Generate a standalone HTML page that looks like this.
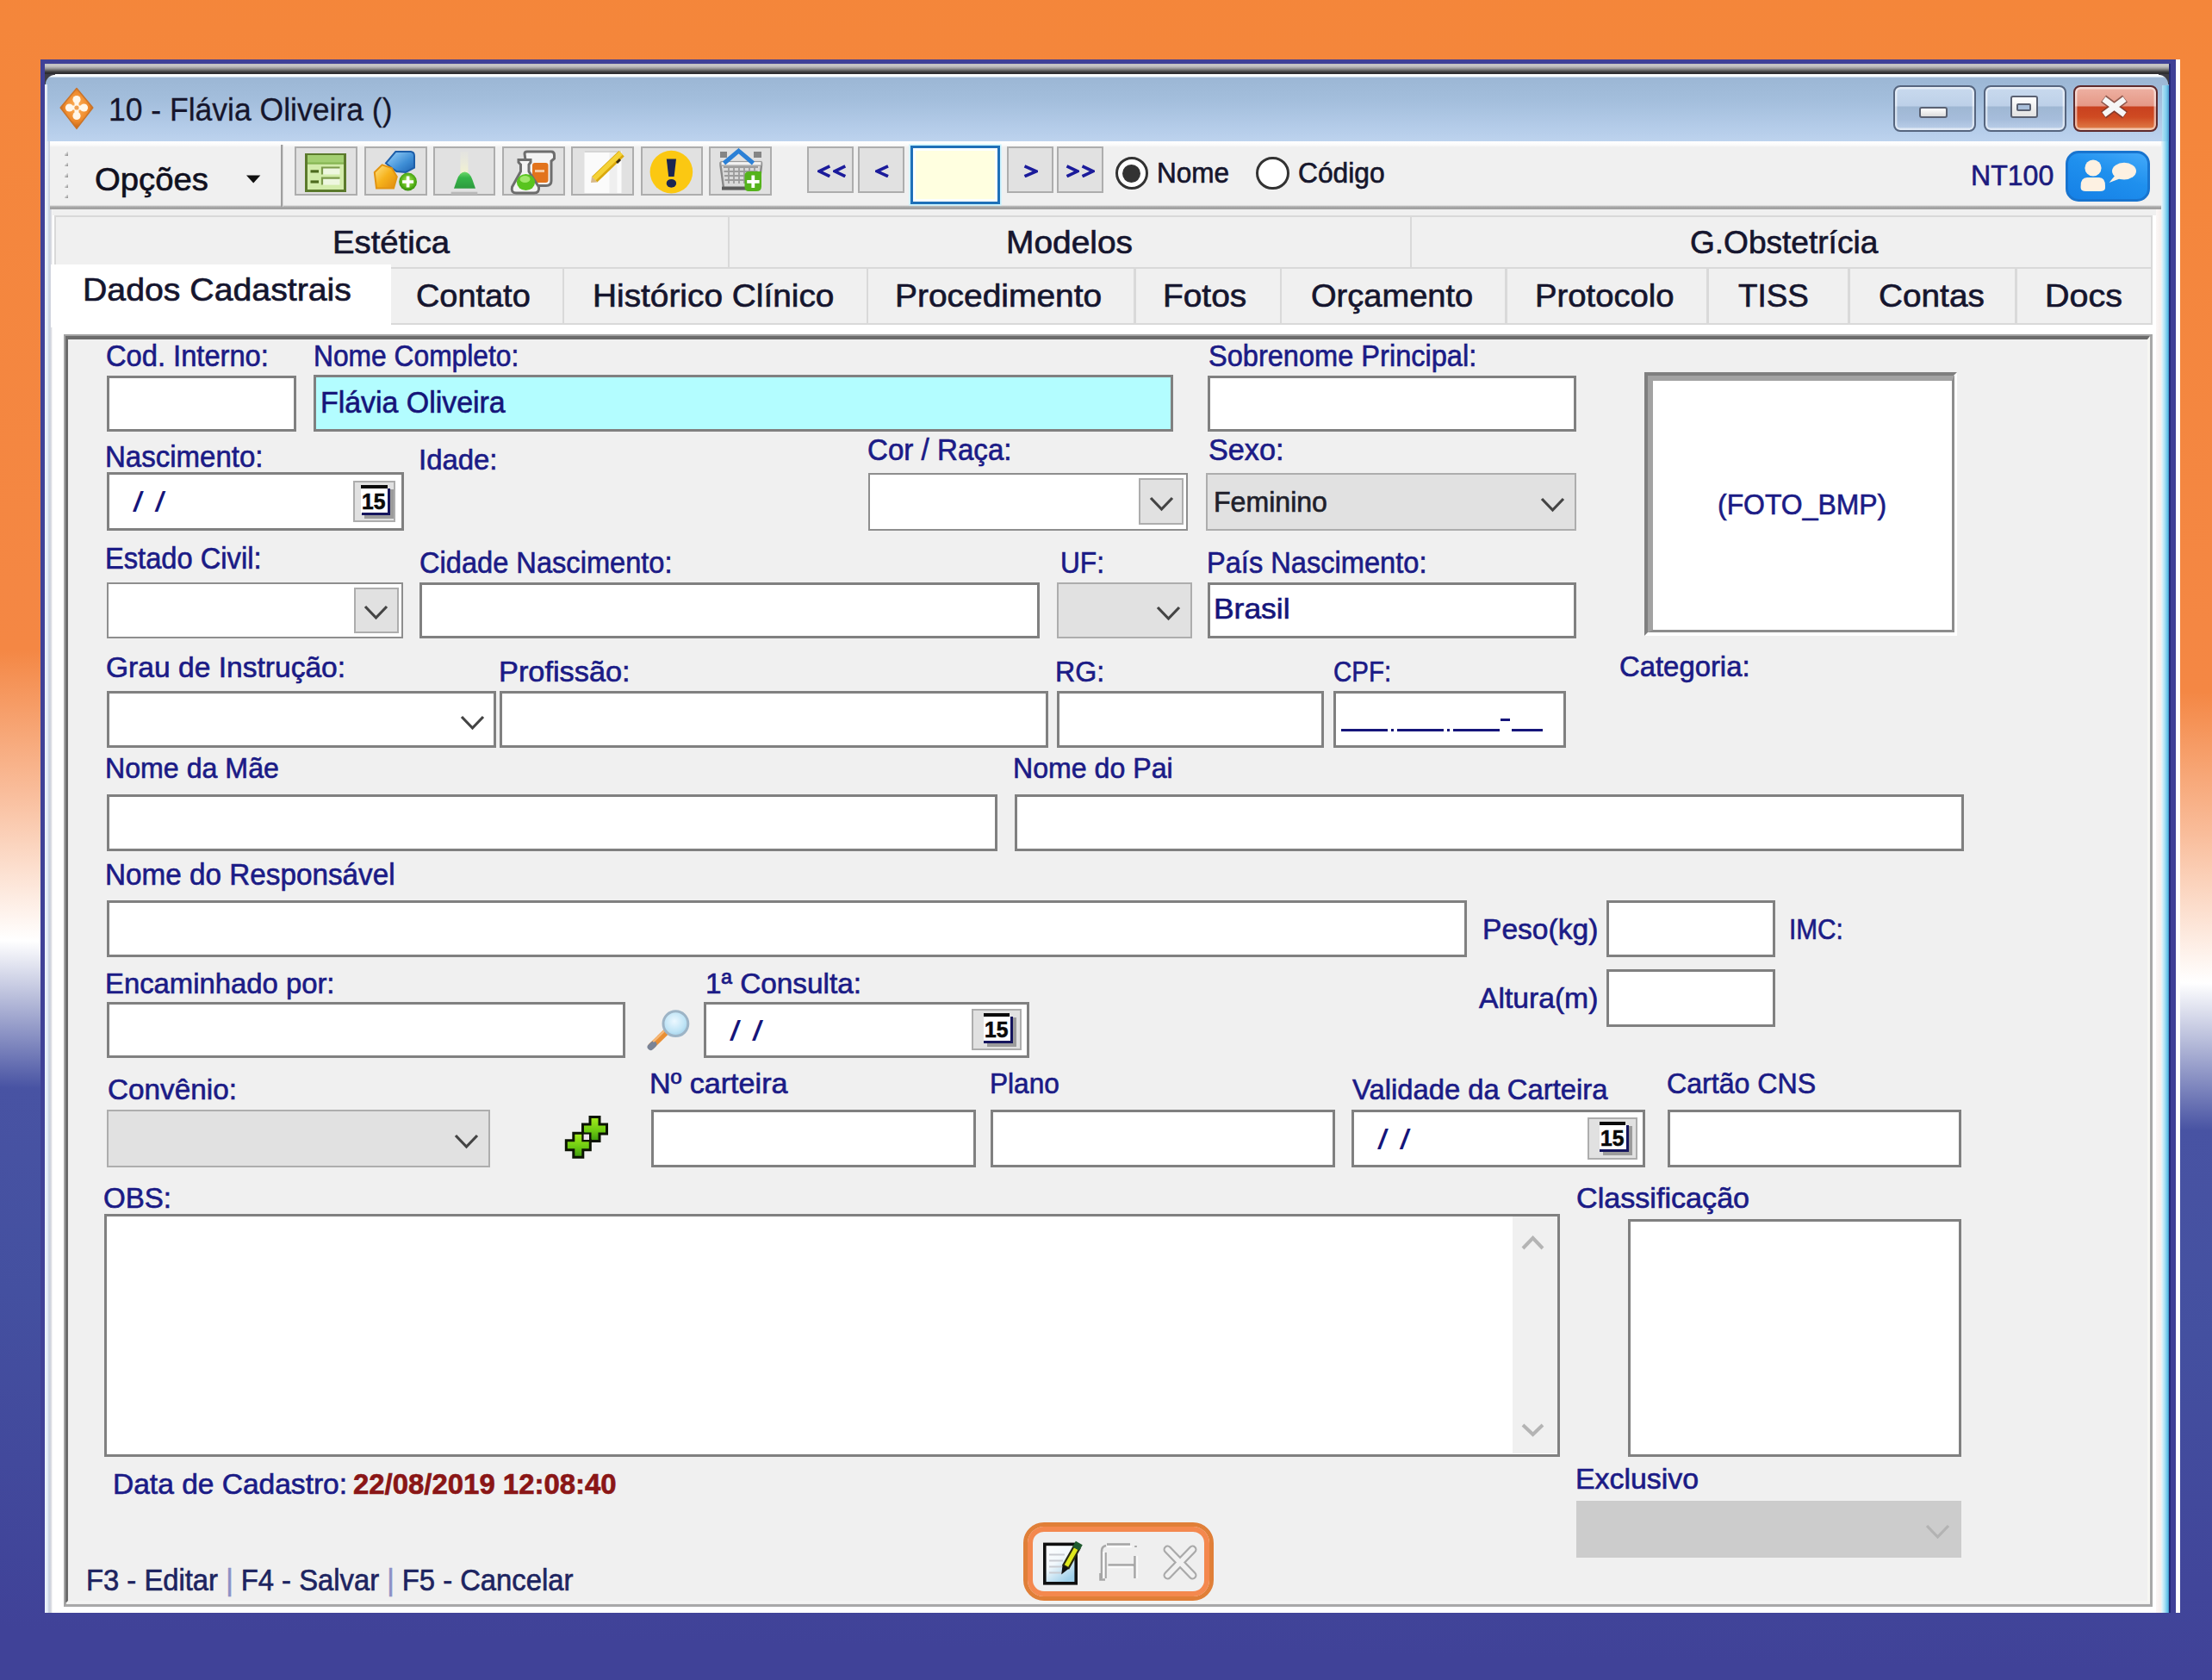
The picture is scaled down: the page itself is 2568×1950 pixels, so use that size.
<!DOCTYPE html>
<html><head><meta charset="utf-8"><title>10 - Flávia Oliveira ()</title>
<style>
html,body{margin:0;padding:0;}
body{width:2568px;height:1950px;position:relative;overflow:hidden;font-family:"Liberation Sans",sans-serif;
background:linear-gradient(181.11deg,#f4863a 0px,#f48744 803px,#f9bd9b 969px,#ffffff 1141px,#b9bedb 1207px,#4853a3 1312px,#4450a0 1549px,#404298 1940px,#404298 100%);}
div,span.t,svg{position:absolute;box-sizing:border-box;}
span.t{white-space:nowrap;line-height:1;transform-origin:0 0;-webkit-text-stroke:0.65px currentColor;}
.in{background:#fff;border:3px solid #7a7a7a;}
.cb{background:#e1e1e1;border:3px solid #adadad;}
.btn{background:#e1e1e1;border:3px solid #adadad;}
</style></head><body>
<div style="left:47.0px;top:69.0px;width:2478.8px;height:1803.0px;background:#3f4197;"></div>
<div style="left:2517.4px;top:74.0px;width:8.4px;height:1798.0px;background:linear-gradient(to right,#1d2a62 0%,#24287a 28%,#3f4197 34%,#3f4197 100%);"></div>
<div style="left:2525.8px;top:69.0px;width:5.4px;height:1803.0px;background:#ffffff;"></div>
<div style="left:52.0px;top:74.0px;width:2465.6px;height:1798.0px;background:#f0f0f0;"></div>
<div style="left:52.0px;top:74.0px;width:2465.6px;height:12.4px;background:linear-gradient(to bottom,#c2c2c2 0%,#c6c6c6 20%,#a2a2a2 42%,#6a6a6a 62%,#343436 82%,#2a2a2e 100%);"></div>
<div style="left:52.0px;top:86.0px;width:2465.6px;height:78.0px;background:linear-gradient(to bottom,#ffffff 0px,#f4f9fd 2.6px,#9cb7d5 4.6px,#a3bedc 30px,#b3cbe8 60px,#bdd3ee 78px);border-top-left-radius:12px;border-top-right-radius:12px;"></div>
<div style="left:52.0px;top:86.0px;width:11.5px;height:11.5px;background:radial-gradient(circle at 100% 100%,rgba(0,0,0,0) 10.6px,#3e3e46 11.6px);"></div>
<div style="left:2506.1px;top:86.0px;width:11.5px;height:11.5px;background:radial-gradient(circle at 0% 100%,rgba(0,0,0,0) 10.6px,#3e3e46 11.6px);"></div>
<div style="left:52.0px;top:98.0px;width:3.4px;height:66.0px;background:linear-gradient(to right,#eef4f8,#dfe9f2);"></div>
<div style="left:52.0px;top:164.0px;width:9.0px;height:1708.0px;background:linear-gradient(to right,#eef4fa 0%,#e4ecf6 35%,#c6cfe0 55%,#d6d8de 80%,#ffffff 100%);"></div>
<div style="left:2503.3px;top:164.0px;width:14.3px;height:1708.0px;background:linear-gradient(to right,#fbf7f6 0%,#f6efed 38%,#e2f4fa 45%,#a9e0f5 68%,#62c0e8 90%,#3f8fc0 100%);"></div>
<div style="left:58.0px;top:163.5px;width:2451.0px;height:79.5px;background:linear-gradient(to bottom,#ffffff 0px,#fbfbfb 4px,#f0f0f0 7px,#f0f0f0 74px,#a8a8a8 76px,#a0a0a0 78.5px,#ffffff 79.5px);"></div>
<div style="left:61.0px;top:243.0px;width:2442.3px;height:1629.0px;background:#ffffff;"></div>
<div style="left:61.0px;top:243.0px;width:2442.3px;height:7.0px;background:#f0f0f0;"></div>
<div style="left:63.0px;top:249.5px;width:2436.0px;height:62.5px;background:#f0f0f0;border:2.5px solid #d9d9d9;"></div>
<span class="t" style="left:385.9px;top:264.0px;font-size:36.5px;color:#15152e;transform:scaleX(1.0486);">Estética</span>
<div style="left:844.8px;top:251.0px;width:2.5px;height:59.0px;background:#d9d9d9;"></div>
<span class="t" style="left:1168.4px;top:264.0px;font-size:36.5px;color:#15152e;transform:scaleX(1.0652);">Modelos</span>
<div style="left:1636.8px;top:251.0px;width:2.5px;height:59.0px;background:#d9d9d9;"></div>
<span class="t" style="left:1962.1px;top:264.0px;font-size:36.5px;color:#15152e;transform:scaleX(1.0152);">G.Obstetrícia</span>
<div style="left:450.0px;top:310.0px;width:2049.0px;height:66.5px;background:#f0f0f0;border:2.5px solid #d9d9d9;"></div>
<span class="t" style="left:483.1px;top:325.0px;font-size:37.0px;color:#15152e;transform:scaleX(1.0240);">Contato</span>
<div style="left:652.8px;top:312.0px;width:2.5px;height:63.0px;background:#d9d9d9;"></div>
<span class="t" style="left:687.6px;top:325.0px;font-size:37.0px;color:#15152e;transform:scaleX(1.0491);">Histórico Clínico</span>
<div style="left:1005.8px;top:312.0px;width:2.5px;height:63.0px;background:#d9d9d9;"></div>
<span class="t" style="left:1038.9px;top:325.0px;font-size:37.0px;color:#15152e;transform:scaleX(1.0520);">Procedimento</span>
<div style="left:1316.4px;top:312.0px;width:2.5px;height:63.0px;background:#d9d9d9;"></div>
<span class="t" style="left:1349.9px;top:325.0px;font-size:37.0px;color:#15152e;transform:scaleX(1.0505);">Fotos</span>
<div style="left:1485.6px;top:312.0px;width:2.5px;height:63.0px;background:#d9d9d9;"></div>
<span class="t" style="left:1522.3px;top:325.0px;font-size:37.0px;color:#15152e;transform:scaleX(1.0288);">Orçamento</span>
<div style="left:1747.2px;top:312.0px;width:2.5px;height:63.0px;background:#d9d9d9;"></div>
<span class="t" style="left:1781.9px;top:325.0px;font-size:37.0px;color:#15152e;transform:scaleX(1.0337);">Protocolo</span>
<div style="left:1981.1px;top:312.0px;width:2.5px;height:63.0px;background:#d9d9d9;"></div>
<span class="t" style="left:2018.0px;top:325.0px;font-size:37.0px;color:#15152e;transform:scaleX(0.9945);">TISS</span>
<div style="left:2145.1px;top:312.0px;width:2.5px;height:63.0px;background:#d9d9d9;"></div>
<span class="t" style="left:2181.1px;top:325.0px;font-size:37.0px;color:#15152e;transform:scaleX(1.0478);">Contas</span>
<div style="left:2339.0px;top:312.0px;width:2.5px;height:63.0px;background:#d9d9d9;"></div>
<span class="t" style="left:2373.8px;top:325.0px;font-size:37.0px;color:#15152e;transform:scaleX(1.0673);">Docs</span>
<div style="left:59.0px;top:307.0px;width:394.5px;height:73.0px;background:#ffffff;"></div>
<span class="t" style="left:95.9px;top:318.0px;font-size:37.0px;color:#15152e;transform:scaleX(1.0607);">Dados Cadastrais</span>
<div style="left:73.6px;top:387.6px;width:2425.4px;height:1477.0px;background:#f0f0f0;border-style:solid;border-width:3px;border-color:#a3a3a3 #a9a9a9 #a9a9a9 #a3a3a3;"></div>
<div style="left:76.4px;top:390.4px;width:2419.8px;height:1470.6px;background:#f0f0f0;border-style:solid;border-width:4px 3.5px 3px 3.6px;border-color:#6b6b6b #f7f7f3 #f4f4f2 #6b6b6b;"></div>
<div style="left:124.0px;top:435.5px;width:220.0px;height:65.5px;background:#ffffff;border:3.1px solid #808080;"></div>
<div style="left:364.3px;top:435.2px;width:997.7px;height:65.8px;background:#b3fdff;border:3.1px solid #808080;"></div>
<div style="left:1402.0px;top:435.5px;width:428.0px;height:65.5px;background:#ffffff;border:3.1px solid #808080;"></div>
<div style="left:124.0px;top:548.0px;width:344.5px;height:68.0px;background:#ffffff;border:3.1px solid #808080;"></div>
<div style="left:1008.0px;top:548.5px;width:371.4px;height:67.0px;background:#ffffff;border:2.6px solid #8e8e8e;"></div>
<div style="left:1322.4px;top:554.8px;width:51.5px;height:54.4px;background:#e1e1e1;border:2.6px solid #adadad;"></div>
<svg style="left:1332.7px;top:574.5px;width:31px;height:20px" viewBox="-3 -3 31 20"><path d="M0 0 L12.5 13 L25 0" fill="none" stroke="#444" stroke-width="3.2" stroke-linecap="butt" stroke-linejoin="miter"/></svg>
<div style="left:1400.0px;top:548.5px;width:430.0px;height:67.0px;background:#e1e1e1;border:2.5px solid #adadad;"></div>
<svg style="left:1787.0px;top:575.5px;width:31px;height:20px" viewBox="-3 -3 31 20"><path d="M0 0 L12.5 13 L25 0" fill="none" stroke="#444" stroke-width="3.2" stroke-linecap="butt" stroke-linejoin="miter"/></svg>
<div style="left:124.0px;top:675.8px;width:344.0px;height:65.5px;background:#ffffff;border:2.6px solid #8e8e8e;"></div>
<div style="left:411.0px;top:682.1px;width:51.5px;height:52.9px;background:#e1e1e1;border:2.6px solid #adadad;"></div>
<svg style="left:421.2px;top:701.0px;width:31px;height:20px" viewBox="-3 -3 31 20"><path d="M0 0 L12.5 13 L25 0" fill="none" stroke="#444" stroke-width="3.2" stroke-linecap="butt" stroke-linejoin="miter"/></svg>
<div style="left:487.0px;top:675.8px;width:720.0px;height:65.5px;background:#ffffff;border:3.1px solid #808080;"></div>
<div style="left:1227.0px;top:675.8px;width:156.5px;height:65.5px;background:#e1e1e1;border:2.5px solid #adadad;"></div>
<svg style="left:1340.5px;top:702.0px;width:31px;height:20px" viewBox="-3 -3 31 20"><path d="M0 0 L12.5 13 L25 0" fill="none" stroke="#444" stroke-width="3.2" stroke-linecap="butt" stroke-linejoin="miter"/></svg>
<div style="left:1402.0px;top:675.8px;width:428.0px;height:65.5px;background:#ffffff;border:3.1px solid #808080;"></div>
<div style="left:124.0px;top:802.3px;width:451.5px;height:65.9px;background:#ffffff;border:3.1px solid #808080;"></div>
<svg style="left:533.0px;top:828.5px;width:31px;height:20px" viewBox="-3 -3 31 20"><path d="M0 0 L12.5 13 L25 0" fill="none" stroke="#444" stroke-width="3.2" stroke-linecap="butt" stroke-linejoin="miter"/></svg>
<div style="left:580.0px;top:802.3px;width:636.7px;height:65.9px;background:#ffffff;border:3.1px solid #808080;"></div>
<div style="left:1226.8px;top:802.3px;width:310.5px;height:65.9px;background:#ffffff;border:3.1px solid #808080;"></div>
<div style="left:1547.5px;top:802.3px;width:270.1px;height:65.9px;background:#ffffff;border:3.1px solid #808080;"></div>
<div style="left:124.0px;top:922.3px;width:1033.7px;height:65.9px;background:#ffffff;border:3.1px solid #808080;"></div>
<div style="left:1178.0px;top:922.3px;width:1101.6px;height:65.9px;background:#ffffff;border:3.1px solid #808080;"></div>
<div style="left:124.0px;top:1045.0px;width:1579.0px;height:66.0px;background:#ffffff;border:3.1px solid #808080;"></div>
<div style="left:1865.0px;top:1045.0px;width:196.0px;height:66.0px;background:#ffffff;border:3.1px solid #808080;"></div>
<div style="left:1865.0px;top:1125.3px;width:196.0px;height:66.3px;background:#ffffff;border:3.1px solid #808080;"></div>
<div style="left:124.0px;top:1162.5px;width:602.0px;height:65.7px;background:#ffffff;border:3.1px solid #808080;"></div>
<div style="left:817.3px;top:1162.5px;width:377.6px;height:65.7px;background:#ffffff;border:3.1px solid #808080;"></div>
<div style="left:124.0px;top:1288.4px;width:445.4px;height:66.6px;background:#e1e1e1;border:2.5px solid #adadad;"></div>
<svg style="left:526.4px;top:1315.2px;width:31px;height:20px" viewBox="-3 -3 31 20"><path d="M0 0 L12.5 13 L25 0" fill="none" stroke="#444" stroke-width="3.2" stroke-linecap="butt" stroke-linejoin="miter"/></svg>
<div style="left:755.5px;top:1288.4px;width:377.9px;height:66.6px;background:#ffffff;border:3.1px solid #808080;"></div>
<div style="left:1149.7px;top:1288.4px;width:400.0px;height:66.6px;background:#ffffff;border:3.1px solid #808080;"></div>
<div style="left:1568.5px;top:1288.4px;width:341.5px;height:66.6px;background:#ffffff;border:3.1px solid #808080;"></div>
<div style="left:1935.5px;top:1288.4px;width:341.5px;height:66.6px;background:#ffffff;border:3.1px solid #808080;"></div>
<div style="left:121.0px;top:1409.0px;width:1690.4px;height:281.5px;background:#ffffff;border:3.1px solid #808080;"></div>
<div style="left:1755.6px;top:1412.2px;width:52.6px;height:275.1px;background:#f0f0f0;"></div>
<svg style="left:1765px;top:1430px;width:30px;height:24px" viewBox="0 0 30 24"><path d="M3 19 L14.6 7 L26 19" fill="none" stroke="#b4b4b4" stroke-width="4"/></svg>
<svg style="left:1765px;top:1650px;width:30px;height:22px" viewBox="0 0 30 22"><path d="M3 4 L14.6 15 L26 4" fill="none" stroke="#b4b4b4" stroke-width="4"/></svg>
<div style="left:1890.0px;top:1415.3px;width:387.0px;height:275.4px;background:#ffffff;border:3.1px solid #808080;"></div>
<div style="left:1830.0px;top:1741.5px;width:447.0px;height:66.3px;background:#cccccc;"></div>
<svg style="left:2233.8px;top:1768.0px;width:31px;height:20px" viewBox="-3 -3 31 20"><path d="M0 0 L12.5 13 L25 0" fill="none" stroke="#b3b3b3" stroke-width="3.2" stroke-linecap="butt" stroke-linejoin="miter"/></svg>
<div style="left:1908.7px;top:431.9px;width:363.7px;height:306.1px;background:#fff;border-style:solid;border-width:4px;border-color:#7f7f7f #ffffff #ffffff #7f7f7f;"></div>
<div style="left:1912.5px;top:435.7px;width:356.5px;height:298.8px;background:#fff;border-style:solid;border-width:6px 3px 3.5px 6px;border-color:#a2a2a2 #8d8d8d #8d8d8d #a2a2a2;"></div>
<span class="t" style="left:123.4px;top:396.0px;font-size:34.5px;color:#1b1b86;transform:scaleX(0.9468);">Cod. Interno:</span>
<span class="t" style="left:363.5px;top:396.0px;font-size:34.5px;color:#1b1b86;transform:scaleX(0.9207);">Nome Completo:</span>
<span class="t" style="left:1402.5px;top:396.0px;font-size:34.5px;color:#1b1b86;transform:scaleX(0.9436);">Sobrenome Principal:</span>
<span class="t" style="left:122.4px;top:513.0px;font-size:34.5px;color:#1b1b86;transform:scaleX(0.9572);">Nascimento:</span>
<span class="t" style="left:486.0px;top:516.0px;font-size:34.0px;color:#1b1b86;transform:scaleX(0.9676);">Idade:</span>
<span class="t" style="left:1007.3px;top:505.0px;font-size:34.5px;color:#1b1b86;transform:scaleX(0.9603);">Cor / Raça:</span>
<span class="t" style="left:1402.5px;top:505.0px;font-size:34.5px;color:#1b1b86;transform:scaleX(0.9921);">Sexo:</span>
<span class="t" style="left:122.4px;top:631.0px;font-size:34.5px;color:#1b1b86;transform:scaleX(0.9465);">Estado Civil:</span>
<span class="t" style="left:487.4px;top:636.0px;font-size:34.5px;color:#1b1b86;transform:scaleX(0.9449);">Cidade Nascimento:</span>
<span class="t" style="left:1231.4px;top:636.0px;font-size:34.5px;color:#1b1b86;transform:scaleX(0.9175);">UF:</span>
<span class="t" style="left:1401.4px;top:636.0px;font-size:34.5px;color:#1b1b86;transform:scaleX(0.9448);">País Nascimento:</span>
<span class="t" style="left:123.3px;top:757.0px;font-size:34.0px;color:#1b1b86;transform:scaleX(0.9876);">Grau de Instrução:</span>
<span class="t" style="left:578.9px;top:762.0px;font-size:34.0px;color:#1b1b86;transform:scaleX(1.0095);">Profissão:</span>
<span class="t" style="left:1225.4px;top:762.0px;font-size:34.0px;color:#1b1b86;transform:scaleX(0.9445);">RG:</span>
<span class="t" style="left:1547.5px;top:762.0px;font-size:34.0px;color:#1b1b86;transform:scaleX(0.8659);">CPF:</span>
<span class="t" style="left:1880.4px;top:756.0px;font-size:34.0px;color:#1b1b86;transform:scaleX(0.9662);">Categoria:</span>
<span class="t" style="left:122.4px;top:874.0px;font-size:34.0px;color:#1b1b86;transform:scaleX(0.9454);">Nome da Mãe</span>
<span class="t" style="left:1176.4px;top:874.0px;font-size:34.0px;color:#1b1b86;transform:scaleX(0.9447);">Nome do Pai</span>
<span class="t" style="left:122.3px;top:998.0px;font-size:34.5px;color:#1b1b86;transform:scaleX(0.9643);">Nome do Responsável</span>
<span class="t" style="left:1721.3px;top:1061.0px;font-size:34.0px;color:#1b1b86;transform:scaleX(0.9875);">Peso(kg)</span>
<span class="t" style="left:2076.7px;top:1061.0px;font-size:34.0px;color:#1b1b86;transform:scaleX(0.8755);">IMC:</span>
<span class="t" style="left:1717.3px;top:1141.0px;font-size:34.0px;color:#1b1b86;transform:scaleX(0.9898);">Altura(m)</span>
<span class="t" style="left:122.4px;top:1124.0px;font-size:34.0px;color:#1b1b86;transform:scaleX(0.9656);">Encaminhado por:</span>
<span class="t" style="left:818.9px;top:1124.0px;font-size:34.0px;color:#1b1b86;transform:scaleX(0.9810);">1ª Consulta:</span>
<span class="t" style="left:125.3px;top:1248.0px;font-size:33.5px;color:#1b1b86;transform:scaleX(0.9943);">Convênio:</span>
<span class="t" style="left:753.9px;top:1241.0px;font-size:33.5px;color:#1b1b86;transform:scaleX(1.0196);">Nº carteira</span>
<span class="t" style="left:1148.5px;top:1241.0px;font-size:33.5px;color:#1b1b86;transform:scaleX(0.9439);">Plano</span>
<span class="t" style="left:1570.3px;top:1248.0px;font-size:33.5px;color:#1b1b86;transform:scaleX(0.9786);">Validade da Carteira</span>
<span class="t" style="left:1935.1px;top:1241.0px;font-size:33.5px;color:#1b1b86;transform:scaleX(0.9589);">Cartão CNS</span>
<span class="t" style="left:120.3px;top:1374.0px;font-size:33.5px;color:#1b1b86;transform:scaleX(0.9862);">OBS:</span>
<span class="t" style="left:1830.3px;top:1374.0px;font-size:33.5px;color:#1b1b86;transform:scaleX(1.0190);">Classificação</span>
<span class="t" style="left:1829.3px;top:1700.0px;font-size:33.5px;color:#1b1b86;transform:scaleX(1.0108);">Exclusivo</span>
<span class="t" style="left:130.5px;top:1706.0px;font-size:33.5px;color:#1b1b86;transform:scaleX(1.0007);">Data de Cadastro:</span>
<span class="t" style="left:1993.8px;top:568.0px;font-size:34.0px;color:#1b1b86;transform:scaleX(0.9387);">(FOTO_BMP)</span>
<span class="t" style="left:409.5px;top:1706.0px;font-size:33.5px;color:#8a1616;font-weight:bold;transform:scaleX(0.9824);">22/08/2019 12:08:40</span>
<span class="t" style="left:100.1px;top:1817.0px;font-size:34.5px;color:#1d2460;transform:scaleX(0.9501);">F3 - Editar <span style="color:#8d8fc6">|</span> F4 - Salvar <span style="color:#8d8fc6">|</span> F5 - Cancelar</span>
<span class="t" style="left:372.3px;top:450.0px;font-size:35.5px;color:#15157a;transform:scaleX(0.9547);">Flávia Oliveira</span>
<span class="t" style="left:1409.4px;top:566.0px;font-size:33.0px;color:#20202a;transform:scaleX(0.9721);">Feminino</span>
<span class="t" style="left:1409.2px;top:689.0px;font-size:34.0px;color:#15157a;transform:scaleX(1.0416);">Brasil</span>
<span class="t" style="left:153.6px;top:566.0px;font-size:33.0px;color:#15157a;transform:scaleX(1.3936);-webkit-text-stroke:0;">/ /</span>
<span class="t" style="left:846.6px;top:1180.0px;font-size:33.0px;color:#15157a;transform:scaleX(1.4190);-webkit-text-stroke:0;">/ /</span>
<span class="t" style="left:1599.0px;top:1306.0px;font-size:33.0px;color:#15157a;transform:scaleX(1.4008);-webkit-text-stroke:0;">/ /</span>
<div style="left:1557.2px;top:846.2px;width:54.1px;height:3.0px;background:#15157a;"></div>
<div style="left:1621.5px;top:846.2px;width:54.9px;height:3.0px;background:#15157a;"></div>
<div style="left:1686.6px;top:846.2px;width:54.1px;height:3.0px;background:#15157a;"></div>
<div style="left:1755.0px;top:846.2px;width:36.2px;height:3.0px;background:#15157a;"></div>
<div style="left:1615.4px;top:846.0px;width:3.0px;height:3.2px;background:#15157a;"></div>
<div style="left:1680.0px;top:846.0px;width:3.0px;height:3.2px;background:#15157a;"></div>
<div style="left:1742.3px;top:834.0px;width:10.6px;height:3.0px;background:#15157a;"></div>
<span class="t" style="left:125.8px;top:110.0px;font-size:36.5px;color:#16162c;transform:scaleX(0.9727);-webkit-text-stroke:0.3px currentColor;">10 - Flávia Oliveira ()</span>
<span class="t" style="left:110.0px;top:190.0px;font-size:37.5px;color:#101020;transform:scaleX(1.0207);">Opções</span>
<span class="t" style="left:2288.4px;top:186.0px;font-size:34.0px;color:#1b1b7e;transform:scaleX(0.9430);">NT100</span>
<span class="t" style="left:1342.8px;top:184.0px;font-size:33.0px;color:#16162c;transform:scaleX(0.9549);">Nome</span>
<span class="t" style="left:1507.1px;top:184.0px;font-size:33.0px;color:#16162c;transform:scaleX(0.9622);">Código</span>
<svg style="left:66.0px;top:98.0px;width:46.0px;height:56.0px" viewBox="0 0 46.0 56.0">
<defs><radialGradient id="dg" cx="50%" cy="45%" r="60%"><stop offset="0" stop-color="#ffb45e"/><stop offset="0.6" stop-color="#ee8a2c"/><stop offset="1" stop-color="#b85a12"/></radialGradient></defs>
<path d="M23 4.6 L41.8 27 L23 51.4 L4.2 27 Z" fill="url(#dg)" stroke="#c9742a" stroke-width="1.5" stroke-linejoin="round"/>
<g fill="#fff7ea"><circle cx="23" cy="17.5" r="4.6"/><circle cx="14.5" cy="27" r="4.6"/><circle cx="31.5" cy="27" r="4.6"/><circle cx="23" cy="36.5" r="4.6"/><rect x="20.5" y="17" width="5" height="20"/><rect x="14" y="24.5" width="18" height="5"/></g>
<circle cx="23" cy="27" r="2.6" fill="#f0a050"/>
</svg>
<div style="left:2198.2px;top:98.8px;width:95.8px;height:54.2px;background:linear-gradient(to bottom,#c9daee 0%,#bdd0e8 44%,#9fb7d3 46%,#a6bddb 75%,#bcd0ea 100%);border:2.6px solid #56657e;border-radius:8px;box-shadow:inset 0 0 0 2.4px rgba(255,255,255,0.55);"></div>
<div style="left:2303.4px;top:98.8px;width:95.6px;height:54.2px;background:linear-gradient(to bottom,#c9daee 0%,#bdd0e8 44%,#9fb7d3 46%,#a6bddb 75%,#bcd0ea 100%);border:2.6px solid #56657e;border-radius:8px;box-shadow:inset 0 0 0 2.4px rgba(255,255,255,0.55);"></div>
<div style="left:2407.0px;top:98.8px;width:98.0px;height:54.2px;background:linear-gradient(to bottom,#eeb2a4 0%,#e59886 44%,#c9411f 46%,#cf4a22 70%,#e0804a 100%);border:2.6px solid #5e2a2c;border-radius:8px;box-shadow:inset 0 0 0 2.4px rgba(255,255,255,0.55);"></div>
<div style="left:2228.3px;top:124.0px;width:32.4px;height:13.2px;background:linear-gradient(to bottom,#ffffff,#dcdcdc);border:2.6px solid #5a6172;border-radius:3px;"></div>
<div style="left:2333.5px;top:110.9px;width:32.5px;height:26.3px;background:linear-gradient(to bottom,#ffffff,#e2e2e2);border:2.6px solid #5a6172;border-radius:3px;"></div>
<div style="left:2341.2px;top:119.8px;width:17.0px;height:8.8px;background:#a9bfda;border:2.6px solid #5a6172;border-radius:2px;"></div>
<svg style="left:2434.0px;top:107.0px;width:41.0px;height:34.0px" viewBox="0 0 41.0 34.0"><path d="M8 7.6 L33 26.4 M33 7.6 L8 26.4" stroke="#6b3a32" stroke-width="10" stroke-linecap="butt" opacity="0.7"/><path d="M8.4 8 L32.6 26 M32.6 8 L8.4 26" stroke="#f6f6f6" stroke-width="6.6" stroke-linecap="butt"/></svg>
<div style="left:2509.8px;top:99.0px;width:7.8px;height:65.0px;background:linear-gradient(to right,#b6e2f4,#7fcdee 60%,#4a9fd0 100%);"></div>
<div style="left:74.5px;top:176.3px;width:4.5px;height:4.4px;background:linear-gradient(135deg,#f8f8f8 20%,#9a9a9a 80%);"></div>
<div style="left:74.5px;top:188.5px;width:4.5px;height:4.4px;background:linear-gradient(135deg,#f8f8f8 20%,#9a9a9a 80%);"></div>
<div style="left:74.5px;top:201.2px;width:4.5px;height:4.4px;background:linear-gradient(135deg,#f8f8f8 20%,#9a9a9a 80%);"></div>
<div style="left:74.5px;top:213.6px;width:4.5px;height:4.4px;background:linear-gradient(135deg,#f8f8f8 20%,#9a9a9a 80%);"></div>
<div style="left:74.5px;top:225.8px;width:4.5px;height:4.4px;background:linear-gradient(135deg,#f8f8f8 20%,#9a9a9a 80%);"></div>
<svg style="left:284.0px;top:202.0px;width:20.0px;height:12.0px" viewBox="0 0 20.0 12.0"><path d="M2 1.6 L18.3 1.6 L10.2 10.6 Z" fill="#101010"/></svg>
<div style="left:326.0px;top:167.5px;width:3.2px;height:72.5px;background:linear-gradient(to right,#9f9f9f 60%,#ffffff 100%);"></div>
<div style="left:342.3px;top:170.0px;width:72.6px;height:57.2px;background:#e1e1e1;border:2.8px solid #adadad;"></div>
<div style="left:423.0px;top:170.0px;width:72.6px;height:57.2px;background:#e1e1e1;border:2.8px solid #adadad;"></div>
<div style="left:502.8px;top:170.0px;width:72.6px;height:57.2px;background:#e1e1e1;border:2.8px solid #adadad;"></div>
<div style="left:583.2px;top:170.0px;width:72.6px;height:57.2px;background:#e1e1e1;border:2.8px solid #adadad;"></div>
<div style="left:663.0px;top:170.0px;width:72.6px;height:57.2px;background:#e1e1e1;border:2.8px solid #adadad;"></div>
<div style="left:743.6px;top:170.0px;width:72.6px;height:57.2px;background:#e1e1e1;border:2.8px solid #adadad;"></div>
<div style="left:823.4px;top:170.0px;width:72.6px;height:57.2px;background:#e1e1e1;border:2.8px solid #adadad;"></div>
<svg style="left:354.0px;top:178.0px;width:48.0px;height:45.0px" viewBox="0 0 48.0 45.0">
<rect x="1.5" y="1" width="45" height="42.5" fill="#d3ecab" stroke="#5b7a2c" stroke-width="3"/>
<rect x="3" y="2" width="42" height="9" fill="#a3cf72"/>
<rect x="3" y="10.5" width="42" height="2.2" fill="#86b553"/>
<rect x="6.5" y="19.3" width="9.5" height="3.2" fill="#4d6a1e"/>
<rect x="6.5" y="31.4" width="9.5" height="3.2" fill="#4d6a1e"/>
<rect x="20" y="16.5" width="20.5" height="8" fill="#eef7e0"/><path d="M20 24.5 V16.5 H40.5" fill="none" stroke="#7b9a4a" stroke-width="2.2"/>
<rect x="20" y="28.6" width="20.5" height="8" fill="#eef7e0"/><path d="M20 36.6 V28.6 H40.5" fill="none" stroke="#7b9a4a" stroke-width="2.2"/>
</svg>
<svg style="left:430.0px;top:172.0px;width:60.0px;height:54.0px" viewBox="0 0 60.0 54.0">
<defs><linearGradient id="pb" x1="0" y1="0" x2="1" y2="1"><stop offset="0" stop-color="#9fd6fb"/><stop offset="0.6" stop-color="#3f8fd6"/><stop offset="1" stop-color="#1e62b0"/></linearGradient>
<linearGradient id="py" x1="0" y1="0" x2="1" y2="1"><stop offset="0" stop-color="#ffe58a"/><stop offset="0.5" stop-color="#f6b21c"/><stop offset="1" stop-color="#e08a10"/></linearGradient>
<radialGradient id="pg" cx="50%" cy="45%" r="60%"><stop offset="0" stop-color="#b6f05a"/><stop offset="0.7" stop-color="#4caa14"/><stop offset="1" stop-color="#2f8208"/></radialGradient></defs>
<path d="M29.3 4 H47 Q51 4.6 51 9 V22.6 L41 28 L30.5 27 L24.8 23 L18 17.4 Z" fill="url(#pb)" stroke="#1d5ea8" stroke-width="2"/>
<path d="M4.8 28 L13.6 19.4 L24.8 23 L30.8 33.2 L27 46.6 H7 Z" fill="url(#py)" stroke="#e19412" stroke-width="2"/>
<circle cx="43.6" cy="39" r="10.4" fill="url(#pg)"/>
<path d="M43.6 32.5 V45.5 M37.1 39 H50.1" stroke="#ffffff" stroke-width="3.6"/>
</svg>
<svg style="left:515.0px;top:172.0px;width:50.0px;height:56.0px" viewBox="0 0 50.0 56.0">
<defs><linearGradient id="fn" x1="0" y1="0" x2="0" y2="1"><stop offset="0" stop-color="#ededdc" stop-opacity="0.2"/><stop offset="1" stop-color="#f3f3cf"/></linearGradient>
<linearGradient id="fg" x1="0" y1="0" x2="0" y2="1"><stop offset="0" stop-color="#6fd86a"/><stop offset="0.35" stop-color="#36b548"/><stop offset="1" stop-color="#2d9a3e"/></linearGradient></defs>
<rect x="19.5" y="4" width="9" height="26" fill="url(#fn)"/>
<path d="M12 46.8 L15.4 37 Q18.6 27.8 24.5 27.6 Q30.4 27.8 33.6 37 L37 46.8 Z" fill="url(#fg)"/>
<rect x="8.7" y="50.7" width="30.6" height="3.3" fill="#b9b9b9"/>
</svg>
<svg style="left:590.0px;top:172.0px;width:60.0px;height:56.0px" viewBox="0 0 60.0 56.0">
<path d="M19 6.5 Q19 4 22 4 H50 Q53.5 4 53.5 8 V12 L50 15 V38 Q50 43.5 44 43.5 H24 Z" fill="#f4f4f4" stroke="#6e6e6e" stroke-width="3"/>
<rect x="28" y="17" width="18.5" height="23" rx="3" fill="#e2731c"/>
<rect x="31" y="25" width="11" height="3" fill="#f6c9a0"/>
<path d="M12 13.5 H26 V16.5 L24 19 V27 L35.5 45 Q36.5 52 30 52 H9 Q3 52 4.5 45 L14.5 27 V19 L12 16.5 Z" fill="#f4f4f4" stroke="#6e6e6e" stroke-width="3"/>
<ellipse cx="20.5" cy="39.5" rx="10.6" ry="9.6" fill="#58c41e"/>
<ellipse cx="19.5" cy="36" rx="6" ry="4" fill="#9fe86a"/>
</svg>
<svg style="left:676.0px;top:173.0px;width:50.0px;height:54.0px" viewBox="0 0 50.0 54.0">
<rect x="2.5" y="2" width="43" height="49" fill="#fbfbfb"/>
<path d="M36 2 V51" stroke="#e4e4e4" stroke-width="9" opacity="0.5"/>
<path d="M2.5 3 H45" stroke="#c9c9c9" stroke-width="1.6"/>
<path d="M45.6 5.2 L14.2 35.2" stroke="#d9a80c" stroke-width="9" stroke-linecap="butt"/>
<path d="M45 4.6 L13.6 34.6" stroke="#f5d236" stroke-width="5.5" stroke-linecap="butt"/>
<path d="M17.5 38.6 L10 39 L11 31.8 Z" fill="#d7b98a"/>
<path d="M44 12 L40 16" stroke="#3b2d10" stroke-width="3"/>
</svg>
<svg style="left:752.0px;top:173.0px;width:55.0px;height:54.0px" viewBox="0 0 55.0 54.0">
<circle cx="27.4" cy="26.6" r="24.8" fill="#fbc812"/>
<path d="M21.8 11.6 H33 L30.6 32 H24.2 Z" fill="#1a2552"/>
<ellipse cx="27.4" cy="39.8" rx="5.7" ry="4.9" fill="#1a2552"/>
</svg>
<svg style="left:832.0px;top:172.0px;width:58.0px;height:54.0px" viewBox="0 0 58.0 54.0">
<rect x="4" y="4" width="8" height="7" fill="#858585"/><rect x="43" y="4" width="9" height="7" fill="#858585"/>
<path d="M4.5 17.5 H52 V20 L49 46 H8 L4.5 20 Z" fill="#d9d9d9" stroke="#8a8a8a" stroke-width="2.4"/>
<path d="M8 22 H48 M8.5 27 H47.5 M9 32 H47 M9.5 37 H46.5 M14 21 V41 M20 21 V41 M26 21 V41 M32 21 V41 M38 21 V41 M44 21 V41" stroke="#9c9c9c" stroke-width="1.8"/>
<rect x="6" y="44.6" width="44" height="4" fill="#5c5c5c"/>
<rect x="5" y="15.5" width="47" height="4.6" fill="#f2f2f2" stroke="#9a9a9a" stroke-width="1.2"/>
<path d="M8.5 17.5 L25.5 3.2 L42.5 17.5" fill="none" stroke="#2b80d6" stroke-width="5" stroke-linejoin="miter"/>
<path d="M32.5 31.5 Q32.5 27 38 27 H52 V44.5 Q52 50 46 50 H37 Q32.5 50 32.5 45 Z" fill="#55b31c"/>
<path d="M42.3 31.6 V46 M35.2 38.8 H49.6" stroke="#ffffff" stroke-width="3.8"/>
</svg>
<div style="left:937.0px;top:170.4px;width:54.0px;height:53.2px;background:#e1e1e1;border:2.8px solid #adadad;"></div>
<div style="left:996.0px;top:170.4px;width:54.0px;height:53.2px;background:#e1e1e1;border:2.8px solid #adadad;"></div>
<div style="left:1168.7px;top:170.4px;width:53.9px;height:53.2px;background:#e1e1e1;border:2.8px solid #adadad;"></div>
<div style="left:1227.0px;top:170.4px;width:54.0px;height:53.2px;background:#e1e1e1;border:2.8px solid #adadad;"></div>
<svg style="left:948.8px;top:190.5px;width:15.8px;height:15.5px" viewBox="0 0 15.8 15.5"><path d="M14.3 1.8 L2 7.8 L14.3 13.7" fill="none" stroke="#1b1b9b" stroke-width="3.6" stroke-linejoin="miter"/></svg>
<svg style="left:966.8px;top:190.5px;width:15.8px;height:15.5px" viewBox="0 0 15.8 15.5"><path d="M14.3 1.8 L2 7.8 L14.3 13.7" fill="none" stroke="#1b1b9b" stroke-width="3.6" stroke-linejoin="miter"/></svg>
<svg style="left:1015.5px;top:190.5px;width:16.5px;height:15.5px" viewBox="0 0 16.5 15.5"><path d="M15.0 1.8 L2 7.8 L15.0 13.7" fill="none" stroke="#1b1b9b" stroke-width="3.6" stroke-linejoin="miter"/></svg>
<svg style="left:1187.5px;top:190.5px;width:17.0px;height:15.5px" viewBox="0 0 17.0 15.5"><path d="M1.5 1.8 L15.0 7.8 L1.5 13.7" fill="none" stroke="#1b1b9b" stroke-width="3.6" stroke-linejoin="miter"/></svg>
<svg style="left:1237.0px;top:190.5px;width:16.0px;height:15.5px" viewBox="0 0 16.0 15.5"><path d="M1.5 1.8 L14.0 7.8 L1.5 13.7" fill="none" stroke="#1b1b9b" stroke-width="3.6" stroke-linejoin="miter"/></svg>
<svg style="left:1255.4px;top:190.5px;width:16.0px;height:15.5px" viewBox="0 0 16.0 15.5"><path d="M1.5 1.8 L14.0 7.8 L1.5 13.7" fill="none" stroke="#1b1b9b" stroke-width="3.6" stroke-linejoin="miter"/></svg>
<div style="left:1057.2px;top:169.2px;width:104.2px;height:67.4px;background:#ffffe0;border:3.4px solid #1f70b8;box-shadow:0 0 0 1.6px #c9f3ff, inset 0 0 0 3px #fbffff;"></div>
<div style="left:1294.5px;top:181.9px;width:38.6px;height:38.6px;background:#ffffff;border:3.3px solid #333333;border-radius:50%;"></div>
<div style="left:1303.4px;top:190.8px;width:20.8px;height:20.8px;background:#333333;border-radius:50%;"></div>
<div style="left:1458.1px;top:181.9px;width:38.6px;height:38.6px;background:#ffffff;border:3.3px solid #333333;border-radius:50%;"></div>
<div style="left:2398.4px;top:175.0px;width:97.3px;height:59.3px;background:linear-gradient(200deg,#44aafa 0%,#1f90ee 45%,#1580e6 100%);border:3px solid #1874cf;border-radius:15px;"></div>
<svg style="left:2410.0px;top:182.0px;width:76.0px;height:46.0px" viewBox="0 0 76.0 46.0">
<g fill="#fdf1e2"><circle cx="20" cy="13" r="9.6"/><path d="M5.6 34 Q5.6 24 13 24 H27 Q34 24 34 34 V36 Q34 40 28 40 H11.6 Q5.6 40 5.6 36 Z"/>
<ellipse cx="56" cy="16.6" rx="14" ry="9.8"/><path d="M46 21 L38.6 30 L52 25 Z"/></g>
</svg>
<div style="left:410.0px;top:557.7px;width:48.8px;height:48.8px;background:#e1e1e1;border:2.8px solid #adadad;"></div>
<div style="left:423.0px;top:568.3px;width:34.0px;height:34.0px;background:#9c9c9c;"></div>
<div style="left:419.0px;top:566.8px;width:31.4px;height:29.7px;background:#ffffff;"></div>
<div style="left:419.0px;top:563.3px;width:30.5px;height:3.8px;background:#0a0a0a;"></div>
<div style="left:450.2px;top:566.7px;width:3.0px;height:31.6px;background:#15155e;"></div>
<div style="left:419.5px;top:595.3px;width:33.7px;height:3.0px;background:#15155e;"></div>
<span class="t" style="left:420.1px;top:569.0px;font-size:26.5px;color:#0a0a0a;font-weight:bold;transform:scaleX(0.9277);">15</span>
<div style="left:1128.4px;top:1170.6px;width:57.3px;height:48.8px;background:#e1e1e1;border:2.8px solid #adadad;"></div>
<div style="left:1145.7px;top:1181.2px;width:34.0px;height:34.0px;background:#9c9c9c;"></div>
<div style="left:1141.7px;top:1179.7px;width:31.4px;height:29.7px;background:#ffffff;"></div>
<div style="left:1141.7px;top:1176.2px;width:30.5px;height:3.8px;background:#0a0a0a;"></div>
<div style="left:1172.9px;top:1179.6px;width:3.0px;height:31.6px;background:#15155e;"></div>
<div style="left:1142.2px;top:1208.2px;width:33.7px;height:3.0px;background:#15155e;"></div>
<span class="t" style="left:1142.8px;top:1182.0px;font-size:26.5px;color:#0a0a0a;font-weight:bold;transform:scaleX(0.9277);">15</span>
<div style="left:1843.2px;top:1296.8px;width:57.8px;height:48.8px;background:#e1e1e1;border:2.8px solid #adadad;"></div>
<div style="left:1860.7px;top:1307.4px;width:34.0px;height:34.0px;background:#9c9c9c;"></div>
<div style="left:1856.7px;top:1305.9px;width:31.4px;height:29.7px;background:#ffffff;"></div>
<div style="left:1856.7px;top:1302.4px;width:30.5px;height:3.8px;background:#0a0a0a;"></div>
<div style="left:1887.9px;top:1305.8px;width:3.0px;height:31.6px;background:#15155e;"></div>
<div style="left:1857.2px;top:1334.4px;width:33.7px;height:3.0px;background:#15155e;"></div>
<span class="t" style="left:1857.8px;top:1308.0px;font-size:26.5px;color:#0a0a0a;font-weight:bold;transform:scaleX(0.9277);">15</span>
<svg style="left:750.0px;top:1168.0px;width:54.0px;height:56.0px" viewBox="0 0 54.0 56.0">
<defs><radialGradient id="mg" cx="45%" cy="40%" r="60%"><stop offset="0" stop-color="#ecf8ff"/><stop offset="0.7" stop-color="#bfe4f6"/><stop offset="1" stop-color="#a5d2ea"/></radialGradient></defs>
<path d="M23 30 L6.5 46" stroke="#e98f34" stroke-width="7.6" stroke-linecap="round"/>
<path d="M8.6 44.2 L5.4 47.2" stroke="#7a8396" stroke-width="7.6" stroke-linecap="round"/>
<path d="M21 28.6 L9 40.4" stroke="#f6b878" stroke-width="2.4" stroke-linecap="round"/>
<circle cx="34.4" cy="20.2" r="14.4" fill="url(#mg)" stroke="#9db4c6" stroke-width="3"/>
</svg>
<svg style="left:652.0px;top:1291.0px;width:58.0px;height:56.0px" viewBox="0 0 58.0 56.0">
<defs><linearGradient id="gp" x1="0" y1="0" x2="0" y2="1"><stop offset="0" stop-color="#a6ec1c"/><stop offset="0.55" stop-color="#6fcc12"/><stop offset="1" stop-color="#3c9a0c"/></linearGradient></defs>
<path d="M33 5.5 H44 V14 H52.5 V25 H44 V33.5 H33 V25 H24.5 V14 H33 Z" fill="url(#gp)" stroke="#0c1404" stroke-width="3" stroke-linejoin="miter"/>
<path d="M13.8 24.3 H24.8 V32.8 H33.3 V43.8 H24.8 V52.3 H13.8 V43.8 H5.3 V32.8 H13.8 Z" fill="url(#gp)" stroke="#0c1404" stroke-width="3" stroke-linejoin="miter"/>
<rect x="25.6" y="25.6" width="6.4" height="6.4" fill="#efe6ef"/>
</svg>
<div style="left:1187.7px;top:1767.0px;width:221.5px;height:90.8px;border:5.2px solid #e07f38;border-radius:24px;"></div>
<div style="left:1192.6px;top:1772.0px;width:211.7px;height:80.8px;border:6px solid #f4884e;border-radius:19px;background:#efefef;"></div>
<svg style="left:1206.0px;top:1786.0px;width:54.0px;height:58.0px" viewBox="0 0 54.0 58.0">
<defs><linearGradient id="ed" x1="0" y1="0" x2="0.6" y2="1"><stop offset="0" stop-color="#ffffff"/><stop offset="0.5" stop-color="#f2f8fc"/><stop offset="1" stop-color="#9fd0ea"/></linearGradient></defs>
<rect x="6.8" y="6.4" width="36.4" height="45.4" fill="url(#ed)" stroke="#101010" stroke-width="3.6"/>
<path d="M12 18.5 H30 M12 25.5 H28 M12 32.5 H27 M12 39.5 H26" stroke="#c9ccd2" stroke-width="2"/>
<path d="M44.6 9 L31 33.4" stroke="#2a2a10" stroke-width="9.4"/>
<path d="M43.2 11.6 L32 31.4" stroke="#dfe81c" stroke-width="5"/>
<path d="M46.8 5 L43.2 11.6" stroke="#1f5a2e" stroke-width="9"/>
<path d="M26.2 41.5 L27.6 30.6 L35 34.4 Z" fill="#101010"/>
</svg>
<svg style="left:1272.0px;top:1786.0px;width:54.0px;height:54.0px" viewBox="0 0 54.0 54.0">
<g fill="none" stroke="#a6a6a6" stroke-width="2.6">
<path d="M7 46 V14 Q7 9 12 8"/><path d="M13 6.5 H40"/><path d="M11.5 46 V16"/><path d="M5.5 40 V47.5 H11"/>
<path d="M14.5 30.5 H45"/><path d="M45.5 20 V46"/><path d="M46.5 8 V10"/>
</g>
<g fill="none" stroke="#fafafa" stroke-width="2.4"><path d="M9.4 46 V15"/><path d="M13 9.2 H42"/><path d="M14.5 33 H43"/><path d="M48 20 V46"/></g>
</svg>
<svg style="left:1345.0px;top:1788.0px;width:50.0px;height:52.0px" viewBox="0 0 50.0 52.0">
<path d="M10.5 10.5 L39.5 40.5 M39.5 10.5 L10.5 40.5" stroke="#a9a9a9" stroke-width="10" stroke-linecap="round"/>
<path d="M10.5 10.5 L39.5 40.5 M39.5 10.5 L10.5 40.5" stroke="#f1f1f1" stroke-width="5.6" stroke-linecap="round"/>
</svg>
</body></html>
